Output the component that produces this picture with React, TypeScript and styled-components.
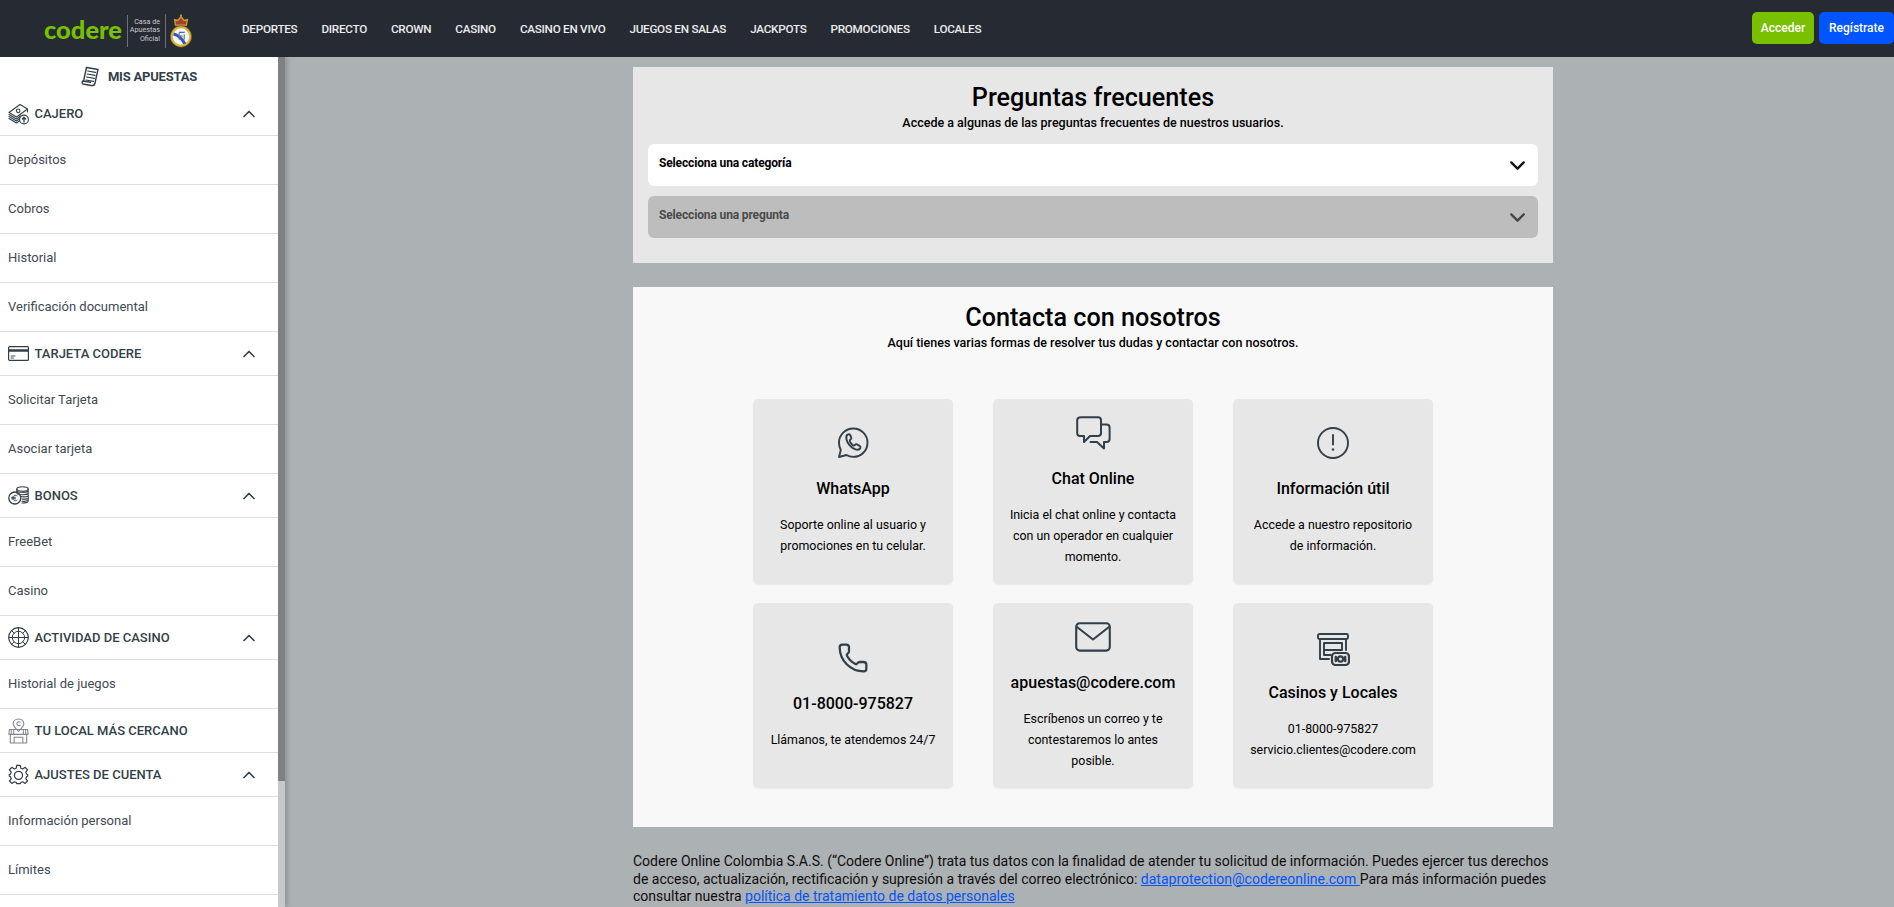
import React from "react";
import styled, { createGlobalStyle } from "styled-components";
import { ChevronDown, ChevronUp, Phone } from "lucide-react";

const Global = createGlobalStyle`
  html, body { margin: 0; padding: 0; height: 100%; overflow: hidden; }
  body { font-family: Roboto, "Liberation Sans", sans-serif; }
  * { box-sizing: border-box; }
`;

const Page = styled.div`
  height: 100vh;
  display: flex;
  flex-direction: column;
  background: #acb1b4;
`;

const TopBar = styled.header`
  flex: 0 0 57px;
  display: flex;
  align-items: center;
  background: #252a33;
  position: relative;
  z-index: 2;
`;

const Brand = styled.div`
  flex: 0 0 242px;
  display: flex;
  align-items: center;
  padding: 4px 0 0 44px;
  height: 100%;
`;

const Wordmark = styled.span`
  font-family: "Lato", sans-serif;
  font-weight: 900;
  font-size: 25.5px;
  line-height: 30px;
  margin-top: -3px;
  color: #79c000;
  width: 83px;
`;

const Rule = styled.i<{ $h: number }>`
  display: block;
  width: 1px;
  height: ${(p) => p.$h}px;
  background: #6d7278;
`;

const Slogan = styled.span`
  font-size: 7.2px;
  line-height: 8.5px;
  color: #c9cbce;
  text-align: right;
  width: 37px;
  padding-right: 5px;
  white-space: nowrap;
`;

const Crest = styled.svg`
  margin-left: 4px;
  flex: none;
`;

const Nav = styled.nav`
  display: flex;
  gap: 24px;
  flex: 1;
`;

const NavLink = styled.a`
  font-size: 11.7px;
  letter-spacing: -0.26px;
  font-weight: 500;
  color: #ececec;
  white-space: nowrap;
`;

const Actions = styled.div`
  display: flex;
  align-items: center;
  gap: 5px;
  margin-top: -1px;
`;

const CtaButton = styled.button<{ $bg: string; $w: number }>`
  height: 32px;
  width: ${(p) => p.$w}px;
  background: ${(p) => p.$bg};
  border: 0;
  border-radius: 5px;
  color: #fff;
  font-family: Roboto, sans-serif;
  font-size: 12px;
  font-weight: 500;
  padding: 0;
`;

const Body = styled.div`
  flex: 1;
  min-height: 0;
  display: flex;
`;

const Sidebar = styled.aside`
  flex: 0 0 285px;
  height: 100%;
  display: flex;
  overflow: hidden;
  background: #fff;
  box-shadow: 2px 0 5px rgba(0, 0, 0, 0.2);
  position: relative;
`;

const SideList = styled.div`
  flex: 0 0 278px;
  height: 100%;
  overflow: hidden;
`;

const ScrollRail = styled.div`
  flex: 0 0 7px;
  height: 100%;
  background: #c8c8c8;
`;

const ScrollThumb = styled.div`
  height: 724px;
  background: #808080;
`;

const BetsLink = styled.div`
  height: 35px;
  padding-top: 4px;
  display: flex;
  align-items: center;
  justify-content: center;
  gap: 9px;
  font-size: 13px;
  letter-spacing: -0.2px;
  font-weight: 700;
  color: #333f48;
`;

const SectionHead = styled.div`
  height: 44px;
  padding: 0 19px 0 8px;
  display: flex;
  align-items: center;
  gap: 5.5px;
  border-bottom: 1px solid #dedede;
  font-size: 13px;
  font-weight: 500;
  color: #333f48;
  svg.chev { margin-left: auto; }
`;

const IconSlot = styled.span`
  flex: 0 0 20px;
  height: 22px;
  display: flex;
  align-items: center;
  justify-content: center;
  color: #333f48;
`;

const Item = styled.div`
  height: 49px;
  padding: 0 0 2px 8px;
  display: flex;
  align-items: center;
  border-bottom: 1px solid #dedede;
  font-size: 13px;
  color: #3f4a53;
`;

const Main = styled.main`
  flex: 1;
  min-width: 0;
  padding: 10px 341px 0 348px;
  overflow: hidden;
`;

const Panel = styled.section<{ $bg: string; $h: number }>`
  background: ${(p) => p.$bg};
  height: ${(p) => p.$h}px;
  padding: 14px 15px 0;
  text-align: center;
  color: #000;
  margin-bottom: 24px;
`;

const Title = styled.h2`
  margin: 0;
  font-size: 25.2px;
  line-height: 33px;
  font-weight: 500;
`;

const Subtitle = styled.p`
  margin: 0 0 13px;
  font-size: 12.5px;
  line-height: 17px;
  font-weight: 500;
`;

const Select = styled.div<{ $off?: boolean }>`
  height: 42px;
  margin-bottom: 10px;
  padding: 0 8.5px 0 11px;
  display: flex;
  align-items: center;
  justify-content: space-between;
  border-radius: 6px;
  background: ${(p) => (p.$off ? "#bdbdbd" : "#fff")};
  color: ${(p) => (p.$off ? "#4a4a4a" : "#000")};
  font-size: 12px;
  letter-spacing: -0.14px;
  font-weight: 700;
`;

const SelectLabel = styled.span`
  margin-bottom: 4px;
`;

const CardGrid = styled.div`
  margin: 48px auto 0;
  width: 680px;
  display: grid;
  grid-template-columns: repeat(3, 200px);
  grid-auto-rows: 185px;
  gap: 19px 40px;
`;

const Card = styled.article`
  background: #e7e7e7;
  border-radius: 5px;
  box-shadow: 0 1px 2px rgba(0, 0, 0, 0.06);
  padding: 0 12px;
  display: flex;
  flex-direction: column;
  align-items: center;
  justify-content: center;
`;

const CardIcon = styled.div`
  height: 32px;
  display: flex;
  align-items: center;
  justify-content: center;
  color: #333f48;
`;

const CardTitle = styled.h3`
  margin: 19px 0 14px;
  font-size: 16px;
  line-height: 22px;
  font-weight: 500;
  white-space: nowrap;
`;

const CardText = styled.p`
  margin: 0;
  font-size: 12.4px;
  line-height: 21px;
`;

const Legal = styled.p`
  margin: 26px 0 0;
  font-size: 14px;
  line-height: 17.5px;
  color: #0d0d0d;
`;

const LegalLink = styled.a`
  color: #0055ff;
  text-decoration: underline;
`;

const Stroke = { fill: "none", stroke: "currentColor", strokeLinecap: "round", strokeLinejoin: "round" } as const;

const ReceiptIcon = () => (
  <svg width="18" height="21" viewBox="0 0 18 21" {...Stroke} strokeWidth="1.4">
    <path d="M5.5 1.5 L17 3.5 L14 17 C13.5 19.5 11.5 19.8 10 19.5 L2 18 C0.8 17.6 0.8 15.6 2 15 L9.5 16.3" />
    <path d="M2.5 15.2 L5.5 1.5" />
    <path d="M6.8 5 L14.5 6.3 M6.2 8 L14 9.3 M5.6 11 L13.3 12.3 M5 14 L12.5 15.3" strokeWidth="1.2" />
  </svg>
);

const CashIcon = () => (
  <svg width="21" height="22" viewBox="0 0 21 22" {...Stroke} strokeWidth="1.1">
    <path d="M1 9.5 L12 1.5 L19.5 6 L8.5 14 Z" />
    <path d="M1 11.5 L8.5 16 L13 12.8 M1 13.5 L8.5 18 L12 15.5 M1 15.5 L8.5 20 L12 17.6 M19.5 6 V9" />
    <circle cx="10.2" cy="7.8" r="1.8" />
    <circle cx="16" cy="16.5" r="4.4" fill="#fff" />
    <path d="M16 19 V14.5 M14.4 16 L16 14.3 L17.6 16" strokeWidth="1.3" />
  </svg>
);

const CardGlyph = () => (
  <svg width="21" height="15" viewBox="0 0 21 15" {...Stroke} strokeWidth="1.2">
    <rect x="0.6" y="0.6" width="19.8" height="13.8" rx="1" />
    <path d="M0.6 4.5 H20.4" strokeWidth="2.6" />
    <path d="M3 10 H7 M3 12 H5.5" strokeWidth="0.9" />
  </svg>
);

const CoinsIcon = () => (
  <svg width="21" height="19" viewBox="0 0 21 19" {...Stroke} strokeWidth="1.1">
    <ellipse cx="14.5" cy="3" rx="5.7" ry="2.2" />
    <path d="M8.8 3 V7 M20.2 3 V15 C20.2 16 18 17 14 17 M8.8 5.2 C10 6.6 18 6.8 20.2 5.2 M9.5 8 C12 9 18 9 20.2 7.8 M12.5 10.5 C15 11 18 11 20.2 10.2 M14 13 C16 13.4 18.5 13 20.2 12.6 M14 15.2 C16 15.5 18.5 15.2 20.2 14.6" />
    <circle cx="6.8" cy="12" r="6" strokeWidth="1.3" />
    <path d="M9 9.8 C7.2 8.4 4.8 9.6 4.8 12 C4.8 14.4 7.2 15.6 9 14.2 M3.6 11.3 H7.4 M3.6 12.8 H7.4" strokeWidth="1" />
  </svg>
);

const WheelIcon = () => (
  <svg width="21" height="21" viewBox="0 0 21 21" {...Stroke} strokeWidth="1.2">
    <circle cx="10.5" cy="10.5" r="9.8" />
    <circle cx="10.5" cy="10.5" r="6.2" strokeWidth="1" />
    <path d="M10.5 0.8 V20.2 M0.8 10.5 H20.2" strokeWidth="1" />
    <path d="M3.6 3.6 L6 6 M17.4 3.6 L15 6 M3.6 17.4 L6 15 M17.4 17.4 L15 15" strokeWidth="1" />
  </svg>
);

const StoreIcon = () => (
  <svg width="21" height="26" viewBox="0 0 21 27" fill="none" stroke="#80868b" strokeWidth="1.1" strokeLinejoin="round">
    <path d="M10.5 1 C7 1 5 3.5 5 6 C5 9 8.5 11.5 10.5 14 C12.5 11.5 16 9 16 6 C16 3.5 14 1 10.5 1 Z" />
    <path d="M12.6 4.6 C11.4 3.4 8.8 4 8.8 6 C8.8 8 11.4 8.6 12.6 7.4" />
    <path d="M1 12 H7 M14 12 H20 L20.5 17 H0.5 L1 12 Z" />
    <path d="M3 12 V17 M5.5 12 V17 M15.5 12 V17 M18 12 V17" />
    <path d="M2 17 V26 H19 V17 M6 26 V20 H15 V26" />
  </svg>
);

const GearIcon = () => (
  <svg width="21" height="21" viewBox="0 0 24 24" {...Stroke} strokeWidth="1.4">
    <path d="M10 1.5 H14 L14.6 4.8 L16.8 5.7 L19.6 3.8 L22.3 6.6 L20.3 9.3 L21.2 11.5 L22.5 12 L22.5 14 L21.2 14.5 L20.3 16.7 L22.3 19.4 L19.6 22.2 L16.8 20.3 L14.6 21.2 L14 22.5 H10 L9.4 21.2 L7.2 20.3 L4.4 22.2 L1.7 19.4 L3.7 16.7 L2.8 14.5 L1.5 14 V12 L2.8 11.5 L3.7 9.3 L1.7 6.6 L4.4 3.8 L7.2 5.7 L9.4 4.8 Z" />
    <circle cx="12" cy="13" r="4.6" />
  </svg>
);

const WhatsappIcon = () => (
  <svg width="32" height="32" viewBox="0 0 32 32" {...Stroke} strokeWidth="1.9">
    <path d="M16.3 1.5 C24.2 1.5 30.5 7.8 30.5 15.7 C30.5 23.6 24.2 29.9 16.3 29.9 C13.8 29.9 11.4 29.2 9.4 28 L2 30 L3.8 23 C2.7 21.2 2 18.5 2 15.7 C2 7.8 8.4 1.5 16.3 1.5 Z" />
    <path d="M11 7.5 C9.6 8 9 9.8 9.4 12 C10.3 16.6 14.2 21 18.6 22.4 C20.8 23 22.7 22.6 23.4 21 C23.8 20 23.4 19.3 22.6 18.8 L20 17.4 C19.2 17 18.5 17.2 18 17.9 C17.4 18.7 16.8 18.8 15.9 18.2 C14.6 17.2 13.5 15.8 12.9 14.3 C12.6 13.4 12.8 12.9 13.6 12.4 C14.3 11.9 14.5 11.3 14.2 10.4 L13.2 8.2 C12.8 7.4 11.9 7.1 11 7.5 Z" />
  </svg>
);

const ChatIcon = () => (
  <svg width="35" height="34" viewBox="0 0 35 34" {...Stroke} strokeWidth="2">
    <path d="M5 1.2 H22 C24 1.2 25 2.4 25 4 V17 C25 19 24 20 22 20 H14 L8 26 V20 H4 C2.2 20 1.2 19 1.2 17 V4 C1.2 2.4 2.6 1.2 5 1.2 Z" />
    <path d="M25 8.5 H30.5 C32.5 8.5 33.6 9.7 33.6 11.5 V23 C33.6 25 32.5 26 30.5 26 H28 V32.5 L21 26 H14.5" />
  </svg>
);

const AlertIcon = () => (
  <svg width="32" height="32" viewBox="0 0 32 32" {...Stroke} strokeWidth="1.9">
    <circle cx="16" cy="16" r="15" />
    <path d="M16 8 V17.5" />
    <path d="M16 22.4 V22.6" strokeWidth="2.4" />
  </svg>
);

const MailIcon = () => (
  <svg width="36" height="30" viewBox="0 0 36 30" {...Stroke} strokeWidth="2.1">
    <rect x="1.2" y="1.2" width="33.6" height="27.4" rx="3.5" />
    <path d="M2 5 L18 17.5 L34 5" />
  </svg>
);

const VenueIcon = () => (
  <svg width="33" height="33" viewBox="0 0 33 33" {...Stroke} strokeWidth="1.9" style={{ marginTop: 4 }}>
    <rect x="1" y="1" width="30" height="5" rx="1.5" />
    <path d="M3 6 V26 H12 M29 6 V17" />
    <rect x="7" y="10" width="18" height="7" />
    <path d="M7 17 V22 H14" />
    <rect x="15" y="20" width="17" height="12" rx="3.5" fill="#e7e7e7" strokeWidth="2.2" />
    <circle cx="23.5" cy="26" r="2.6" strokeWidth="2.2" />
    <path d="M18.8 24 V28 M28.2 24 V28" strokeWidth="2.4" />
  </svg>
);

const RealCrest = () => (
  <Crest width="22" height="34" viewBox="0 0 24 37" aria-hidden="true">
    <path d="M6 12 L5 6 L8.5 7 L12 3 L15.5 7 L19 6 L18 12 Z" fill="#a63c3c" stroke="#c9a227" strokeWidth="1.4" />
    <circle cx="12" cy="1.8" r="1.2" fill="#c9a227" />
    <circle cx="12" cy="24.5" r="11.6" fill="#d9b13b" stroke="#5a4a1a" strokeWidth="0.6" />
    <circle cx="12" cy="24.5" r="9" fill="#f4f4f4" />
    <path d="M4.2 20 C9 21 15 26 17.8 32 L14.5 33 C12 28 8 24.4 3.4 23.4 Z" fill="#3559a8" />
    <path d="M10 20 H16 M10 20 V28 M10 24 H14 M15.5 22 V28" stroke="#4a6aad" strokeWidth="1.1" fill="none" />
  </Crest>
);

type Row = { label: string; icon: React.ReactNode; open?: boolean; items: string[] };

const sections: Row[] = [
  { label: "CAJERO", icon: <CashIcon />, open: true, items: ["Depósitos", "Cobros", "Historial", "Verificación documental"] },
  { label: "TARJETA CODERE", icon: <CardGlyph />, open: true, items: ["Solicitar Tarjeta", "Asociar tarjeta"] },
  { label: "BONOS", icon: <CoinsIcon />, open: true, items: ["FreeBet", "Casino"] },
  { label: "ACTIVIDAD DE CASINO", icon: <WheelIcon />, open: true, items: ["Historial de juegos"] },
  { label: "TU LOCAL MÁS CERCANO", icon: <StoreIcon />, items: [] },
  { label: "AJUSTES DE CUENTA", icon: <GearIcon />, open: true, items: ["Información personal", "Límites"] },
];

const navItems = ["DEPORTES", "DIRECTO", "CROWN", "CASINO", "CASINO EN VIVO", "JUEGOS EN SALAS", "JACKPOTS", "PROMOCIONES", "LOCALES"];

const cards: { icon: React.ReactNode; title: string; lines: string[] }[] = [
  { icon: <WhatsappIcon />, title: "WhatsApp", lines: ["Soporte online al usuario y", "promociones en tu celular."] },
  { icon: <ChatIcon />, title: "Chat Online", lines: ["Inicia el chat online y contacta", "con un operador en cualquier", "momento."] },
  { icon: <AlertIcon />, title: "Información útil", lines: ["Accede a nuestro repositorio", "de información."] },
  { icon: <Phone size={32} strokeWidth={1.7} />, title: "01-8000-975827", lines: ["Llámanos, te atendemos 24/7"] },
  { icon: <MailIcon />, title: "apuestas@codere.com", lines: ["Escríbenos un correo y te", "contestaremos lo antes", "posible."] },
  { icon: <VenueIcon />, title: "Casinos y Locales", lines: ["01-8000-975827", "servicio.clientes@codere.com"] },
];

export default function App() {
  return (
    <Page>
      <Global />
      <TopBar>
        <Brand>
          <Wordmark>codere</Wordmark>
          <Rule $h={32} />
          <Slogan>
            Casa de
            <br />
            Apuestas
            <br />
            Oficial
          </Slogan>
          <Rule $h={34} />
          <RealCrest />
        </Brand>
        <Nav>
          {navItems.map((n) => (
            <NavLink key={n}>{n}</NavLink>
          ))}
        </Nav>
        <Actions>
          <CtaButton $bg="#79c000" $w={62}>Acceder</CtaButton>
          <CtaButton $bg="#0055ff" $w={75}>Regístrate</CtaButton>
        </Actions>
      </TopBar>
      <Body>
        <Sidebar>
          <SideList>
            <BetsLink>
              <ReceiptIcon />
              MIS APUESTAS
            </BetsLink>
            {sections.map((s) => (
              <React.Fragment key={s.label}>
                <SectionHead>
                  <IconSlot>{s.icon}</IconSlot>
                  {s.label}
                  {s.open && <ChevronUp className="chev" size={20} strokeWidth={2} />}
                </SectionHead>
                {s.items.map((i) => (
                  <Item key={i}>{i}</Item>
                ))}
              </React.Fragment>
            ))}
          </SideList>
          <ScrollRail>
            <ScrollThumb />
          </ScrollRail>
        </Sidebar>
        <Main>
          <Panel $bg="#e7e7e7" $h={196}>
            <Title>Preguntas frecuentes</Title>
            <Subtitle>Accede a algunas de las preguntas frecuentes de nuestros usuarios.</Subtitle>
            <Select>
              <SelectLabel>Selecciona una categoría</SelectLabel>
              <ChevronDown size={25} strokeWidth={2.2} color="#111" />
            </Select>
            <Select $off>
              <SelectLabel>Selecciona una pregunta</SelectLabel>
              <ChevronDown size={25} strokeWidth={2.2} color="#444" />
            </Select>
          </Panel>
          <Panel $bg="#f8f8f8" $h={540}>
            <Title>Contacta con nosotros</Title>
            <Subtitle>Aquí tienes varias formas de resolver tus dudas y contactar con nosotros.</Subtitle>
            <CardGrid>
              {cards.map((c) => (
                <Card key={c.title}>
                  <CardIcon>{c.icon}</CardIcon>
                  <CardTitle>{c.title}</CardTitle>
                  <CardText>
                    {c.lines.map((l, idx) => (
                      <React.Fragment key={l}>
                        {idx > 0 && <br />}
                        {l}
                      </React.Fragment>
                    ))}
                  </CardText>
                </Card>
              ))}
            </CardGrid>
          </Panel>
          <Legal>
            Codere Online Colombia S.A.S. (“Codere Online”) trata tus datos con la finalidad de atender tu solicitud de información. Puedes ejercer tus derechos de acceso, actualización, rectificación y supresión a través del correo electrónico:{" "}
            <LegalLink>dataprotection@codereonline.com </LegalLink>
            Para más información puedes consultar nuestra <LegalLink>política de tratamiento de datos personales</LegalLink>
          </Legal>
        </Main>
      </Body>
    </Page>
  );
}
